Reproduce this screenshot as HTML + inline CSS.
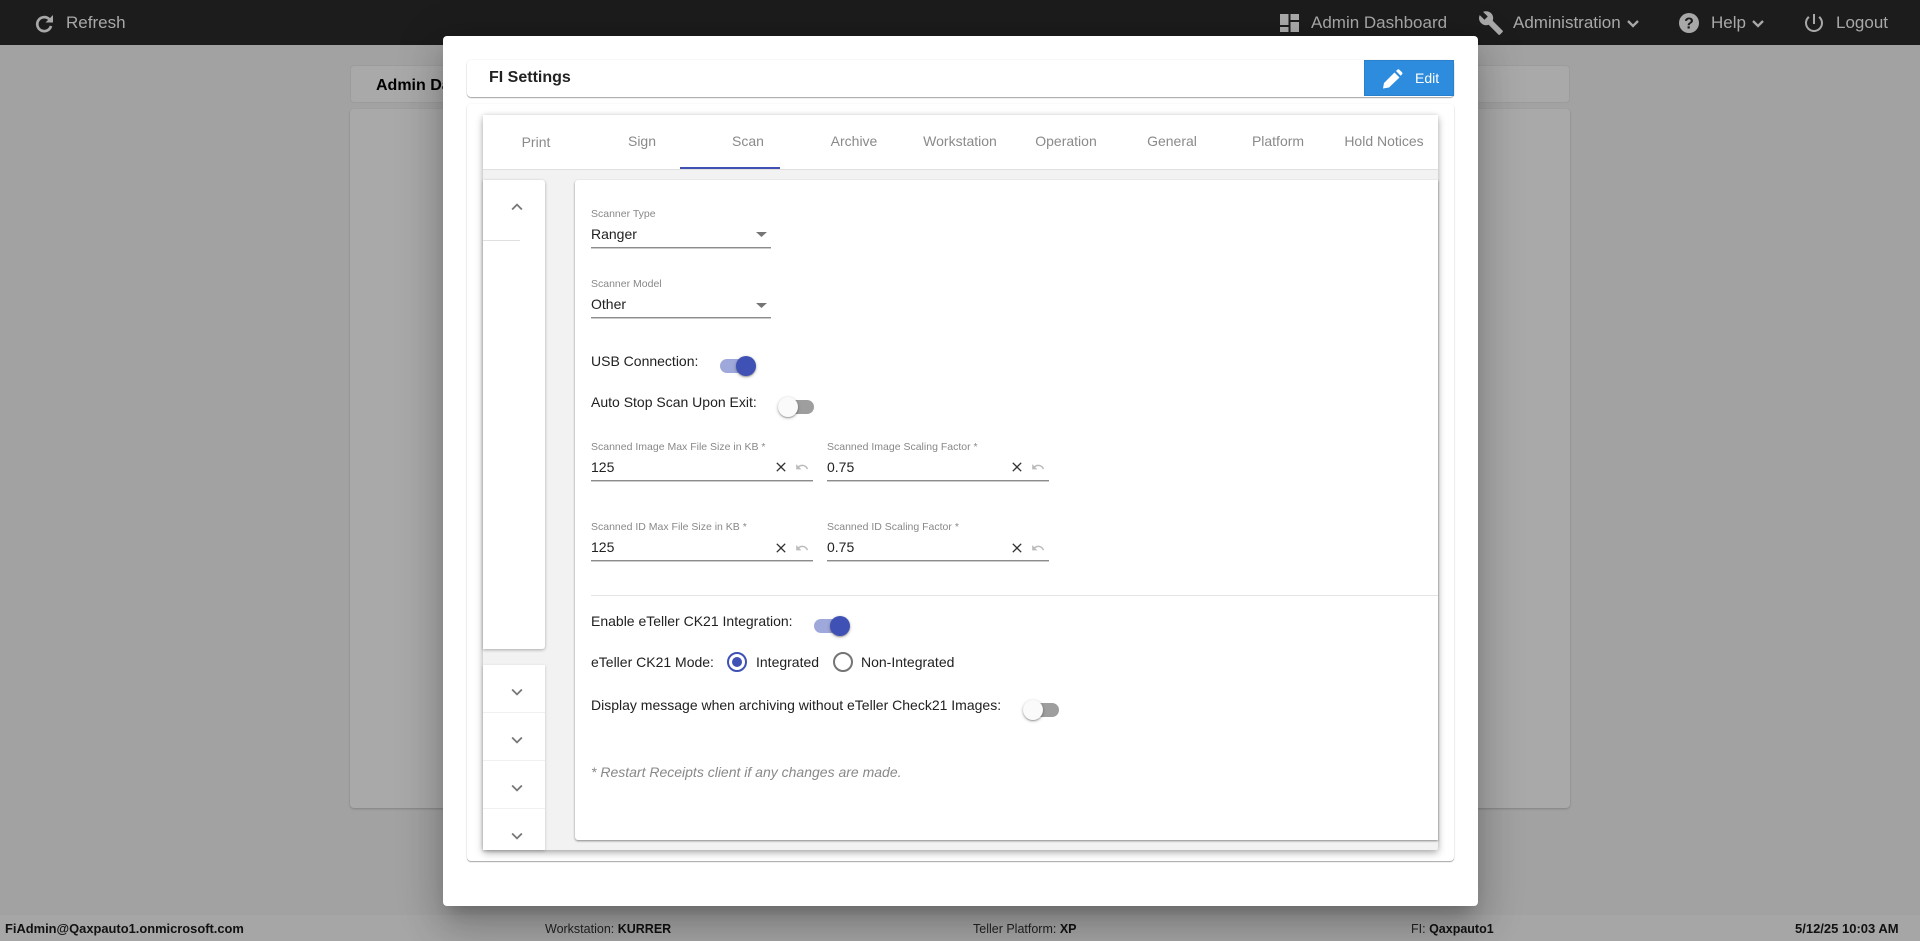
<!DOCTYPE html>
<html><head><meta charset="utf-8"><title>FI Settings</title>
<style>
html,body{margin:0;padding:0;width:1920px;height:941px;overflow:hidden;background:#a2a2a2;font-family:"Liberation Sans",sans-serif}
div,span,svg{position:absolute;box-sizing:border-box}
.t{white-space:nowrap;line-height:20px;height:20px;font-size:14px;color:#212121}
.n{color:#a8a8a8;font-size:17px;top:13px}
.l{font-size:10.5px;color:#888}
.tab{color:#8a8a8a;width:106px;text-align:center;top:131px}
.u{height:1px;background:#8c8c8c;border-bottom:1px solid #ccc;height:2px}
.f{font-size:12.5px;color:#222;top:919px}
.f b{color:#111}
b{position:static}
.tt{height:14px;border-radius:7px}
.th{width:20px;height:20px;border-radius:50%;box-shadow:0 1px 3px rgba(0,0,0,.3),0 1px 1px rgba(0,0,0,.2)}
</style></head><body>
<div style="left:0;top:0;width:1920px;height:45px;background:#1c1c1c"></div>
<svg style="left:34px;top:13px" width="21" height="21" viewBox="0 0 21 21"><path d="M15.200 6.200A7 7 0 1 0 17 13" fill="none" stroke="#a8a8a8" stroke-width="2.700"/><path d="M19 2v7.500h-7.500z" fill="#a8a8a8"/></svg>
<div class="t n" style="left:66px">Refresh</div>
<svg style="left:1280px;top:14px" width="19" height="18" viewBox="0 0 19 18" fill="#aaa"><path d="M0 0h8.500v11H0zM0 13h8.500v5H0zM10.500 0H19v6h-8.500zM10.500 8H19v10h-8.500z"/></svg>
<div class="t n" style="left:1311px">Admin Dashboard</div>
<svg style="left:1478px;top:10px" width="26" height="26" viewBox="0 0 24 24" fill="#a8a8a8"><path d="M22.700 19l-9.100-9.100c.9-2.300.4-5-1.500-6.900-2-2-5-2.400-7.400-1.300L9 6 6 9 1.600 4.700C.4 7.100.9 10.100 2.900 12.100c1.900 1.900 4.600 2.400 6.900 1.500l9.100 9.100c.4.4 1 .4 1.400 0l2.300-2.300c.5-.4.5-1.100.1-1.400z"/></svg>
<div class="t n" style="left:1513px">Administration</div>
<svg style="left:1626px;top:19px" width="14" height="9" viewBox="0 0 14 9"><path d="M2 2l5 5 5-5" fill="none" stroke="#a8a8a8" stroke-width="2.300"/></svg>
<svg style="left:1679px;top:13px" width="20" height="20" viewBox="0 0 20 20"><circle cx="10" cy="10" r="10" fill="#a8a8a8"/><text x="10" y="15.500" text-anchor="middle" font-family="Liberation Sans" font-weight="bold" font-size="16" fill="#1c1c1c">?</text></svg>
<div class="t n" style="left:1711px">Help</div>
<svg style="left:1751px;top:19px" width="14" height="9" viewBox="0 0 14 9"><path d="M2 2l5 5 5-5" fill="none" stroke="#a8a8a8" stroke-width="2.300"/></svg>
<svg style="left:1802px;top:11px" width="24" height="24" viewBox="0 0 24 24" fill="#a8a8a8"><path d="M13 3h-2v10h2V3zm4.830 2.170l-1.420 1.420C17.990 7.860 19 9.810 19 12c0 3.870-3.130 7-7 7s-7-3.130-7-7c0-2.190 1.010-4.140 2.580-5.420L6.170 5.170C4.230 6.820 3 9.260 3 12c0 4.970 4.030 9 9 9s9-4.030 9-9c0-2.740-1.230-5.180-3.170-6.830z"/></svg>
<div class="t n" style="left:1836px">Logout</div>

<div style="left:350px;top:65px;width:1220px;height:38px;background:#a9a9a9;border:1px solid #9c9c9c;border-radius:4px"></div>
<div class="t" style="left:376px;top:76px;font-size:16px;font-weight:bold;color:#000">Admin Dashboard</div>
<div style="left:350px;top:109px;width:1220px;height:699px;background:#a9a9a9;border-radius:4px;box-shadow:0 1px 2px rgba(0,0,0,.2)"></div>

<div style="left:0;top:915px;width:1920px;height:26px;background:#a6a6a6"></div>
<div class="t f" style="left:5px;font-weight:bold;color:#111;font-size:12.900px">FiAdmin@Qaxpauto1.onmicrosoft.com</div>
<div class="t f" style="left:545px">Workstation: <b>KURRER</b></div>
<div class="t f" style="left:973px">Teller Platform: <b>XP</b></div>
<div class="t f" style="left:1411px">FI: <b>Qaxpauto1</b></div>
<div class="t f" style="left:1795px;font-weight:bold;color:#111;font-size:13px">5/12/25 10:03 AM</div>

<div style="left:443px;top:36px;width:1035px;height:870px;background:#fff;border-radius:4px;box-shadow:0 11px 15px -7px rgba(0,0,0,.2),0 24px 38px 3px rgba(0,0,0,.14),0 9px 46px 8px rgba(0,0,0,.12)"></div>

<div style="left:467px;top:60px;width:987px;height:37px;background:#fff;border-radius:4px;box-shadow:0 1px 1px rgba(0,0,0,.35),0 0 2px rgba(0,0,0,.08)"></div>
<div class="t" style="left:489px;top:68px;font-size:16px;font-weight:bold;color:#222">FI Settings</div>
<div style="left:1364px;top:60px;width:90px;height:36px;background:#2d8cdd;border:1px solid #2a80ca"></div>
<svg style="left:1383px;top:69px" width="20" height="20" viewBox="0 0 20 20" fill="#fff"><path d="M0 19.500l1-5.500L11.500 3.500l5 5L6 18.500zM13 2l1.300-1.300c.6-.6 1.500-.6 2.100 0l2.600 2.600c.6.6.6 1.500 0 2.100L17.700 6.700z"/></svg>
<div class="t" style="left:1415px;top:68px;color:#fff">Edit</div>

<div style="left:467px;top:104px;width:987px;height:757px;background:#fff;border-radius:4px;box-shadow:0 1px 1px rgba(0,0,0,.35),0 0 2px rgba(0,0,0,.06)"></div>

<div style="left:483px;top:115px;width:955px;height:735px;background:#f2f2f2;box-shadow:0 3px 8px rgba(0,0,0,.3),0 0 5px rgba(0,0,0,.1);border-radius:2px"></div>
<div style="left:483px;top:115px;width:955px;height:55px;background:#fff;border-bottom:1px solid #e0e0e0"></div>
<div class="t tab" style="left:483px;top:132px">Print</div>
<div class="t tab" style="left:589px">Sign</div>
<div class="t tab" style="left:695px">Scan</div>
<div class="t tab" style="left:801px">Archive</div>
<div class="t tab" style="left:907px">Workstation</div>
<div class="t tab" style="left:1013px">Operation</div>
<div class="t tab" style="left:1119px">General</div>
<div class="t tab" style="left:1225px">Platform</div>
<div class="t tab" style="left:1331px">Hold Notices</div>
<div style="left:680px;top:167px;width:100px;height:2px;background:#3f51b5"></div>

<div style="left:483px;top:180px;width:62px;height:469px;background:#fff;border-radius:0 3px 3px 0;box-shadow:0 1px 3px rgba(0,0,0,.3)"></div>
<svg style="left:506px;top:196px" width="22" height="22" viewBox="0 0 24 24" fill="#777"><path d="M7.410 15.410L12 10.830l4.590 4.580L18 14l-6-6-6 6z"/></svg>
<div style="left:483px;top:240px;width:37px;height:1px;background:#e0e0e0"></div>

<div style="left:483px;top:665px;width:62px;height:185px;background:#fff;box-shadow:0 1px 3px rgba(0,0,0,.2)"></div>
<div style="left:483px;top:712px;width:62px;height:1px;background:#f0f0f0"></div>
<div style="left:483px;top:760px;width:62px;height:1px;background:#f0f0f0"></div>
<div style="left:483px;top:808px;width:62px;height:1px;background:#f0f0f0"></div>
<svg style="left:506px;top:681px" width="22" height="22" viewBox="0 0 24 24" fill="#777"><path d="M7.410 8.590L12 13.170l4.590-4.580L18 10l-6 6-6-6z"/></svg>
<svg style="left:506px;top:729px" width="22" height="22" viewBox="0 0 24 24" fill="#777"><path d="M7.410 8.590L12 13.170l4.590-4.580L18 10l-6 6-6-6z"/></svg>
<svg style="left:506px;top:777px" width="22" height="22" viewBox="0 0 24 24" fill="#777"><path d="M7.410 8.590L12 13.170l4.590-4.580L18 10l-6 6-6-6z"/></svg>
<svg style="left:506px;top:825px" width="22" height="22" viewBox="0 0 24 24" fill="#777"><path d="M7.410 8.590L12 13.170l4.590-4.580L18 10l-6 6-6-6z"/></svg>

<div style="left:575px;top:180px;width:863px;height:660px;background:#fff;border-radius:3px 0 0 3px;box-shadow:0 1px 2px rgba(0,0,0,.45)"></div>

<div class="t l" style="left:591px;top:204px">Scanner Type</div>
<div class="t" style="left:591px;top:224px">Ranger</div>
<svg style="left:756px;top:232px" width="11" height="5" viewBox="0 0 11 5" fill="#757575"><path d="M0 0h11L5.500 5z"/></svg>
<div class="u" style="left:591px;top:247px;width:180px"></div>

<div class="t l" style="left:591px;top:274px">Scanner Model</div>
<div class="t" style="left:591px;top:294px">Other</div>
<svg style="left:756px;top:303px" width="11" height="5" viewBox="0 0 11 5" fill="#757575"><path d="M0 0h11L5.500 5z"/></svg>
<div class="u" style="left:591px;top:317px;width:180px"></div>

<div class="t" style="left:591px;top:351px">USB Connection:</div>
<div class="tt" style="left:720px;top:359px;width:34px;background:#9fa8da"></div>
<div class="th" style="left:736px;top:356px;background:#3f51b5"></div>

<div class="t" style="left:591px;top:392px">Auto Stop Scan Upon Exit:</div>
<div class="tt" style="left:780px;top:400px;width:34px;background:#9e9e9e"></div>
<div class="th" style="left:778px;top:397px;background:#fafafa"></div>

<div class="t l" style="left:591px;top:437px">Scanned Image Max File Size in KB *</div>
<div class="t" style="left:591px;top:457px">125</div>
<svg style="left:773px;top:459px" width="16" height="16" viewBox="0 0 24 24" fill="#333"><path d="M19 6.410L17.590 5 12 10.590 6.410 5 5 6.410 10.590 12 5 17.590 6.410 19 12 13.410 17.590 19 19 17.590 13.410 12z"/></svg>
<svg style="left:795px;top:460px" width="14" height="14" viewBox="0 0 24 24" fill="#bbb"><path d="M12.500 8c-2.650 0-5.050.99-6.900 2.600L2 7v9h9l-3.620-3.620c1.390-1.160 3.160-1.880 5.120-1.880 3.540 0 6.550 2.310 7.600 5.500l2.370-.78C21.080 11.030 17.150 8 12.500 8z"/></svg>
<div class="u" style="left:591px;top:480px;width:222px"></div>

<div class="t l" style="left:827px;top:437px">Scanned Image Scaling Factor *</div>
<div class="t" style="left:827px;top:457px">0.75</div>
<svg style="left:1009px;top:459px" width="16" height="16" viewBox="0 0 24 24" fill="#333"><path d="M19 6.410L17.590 5 12 10.590 6.410 5 5 6.410 10.590 12 5 17.590 6.410 19 12 13.410 17.590 19 19 17.590 13.410 12z"/></svg>
<svg style="left:1031px;top:460px" width="14" height="14" viewBox="0 0 24 24" fill="#bbb"><path d="M12.500 8c-2.650 0-5.050.99-6.900 2.600L2 7v9h9l-3.620-3.620c1.390-1.160 3.160-1.880 5.120-1.880 3.540 0 6.550 2.310 7.600 5.500l2.370-.78C21.080 11.030 17.150 8 12.500 8z"/></svg>
<div class="u" style="left:827px;top:480px;width:222px"></div>

<div class="t l" style="left:591px;top:517px">Scanned ID Max File Size in KB *</div>
<div class="t" style="left:591px;top:537px">125</div>
<svg style="left:773px;top:540px" width="16" height="16" viewBox="0 0 24 24" fill="#333"><path d="M19 6.410L17.590 5 12 10.590 6.410 5 5 6.410 10.590 12 5 17.590 6.410 19 12 13.410 17.590 19 19 17.590 13.410 12z"/></svg>
<svg style="left:795px;top:541px" width="14" height="14" viewBox="0 0 24 24" fill="#bbb"><path d="M12.500 8c-2.650 0-5.050.99-6.900 2.600L2 7v9h9l-3.620-3.620c1.390-1.160 3.160-1.880 5.120-1.880 3.540 0 6.550 2.310 7.600 5.500l2.370-.78C21.080 11.030 17.150 8 12.500 8z"/></svg>
<div class="u" style="left:591px;top:560px;width:222px"></div>

<div class="t l" style="left:827px;top:517px">Scanned ID Scaling Factor *</div>
<div class="t" style="left:827px;top:537px">0.75</div>
<svg style="left:1009px;top:540px" width="16" height="16" viewBox="0 0 24 24" fill="#333"><path d="M19 6.410L17.590 5 12 10.590 6.410 5 5 6.410 10.590 12 5 17.590 6.410 19 12 13.410 17.590 19 19 17.590 13.410 12z"/></svg>
<svg style="left:1031px;top:541px" width="14" height="14" viewBox="0 0 24 24" fill="#bbb"><path d="M12.500 8c-2.650 0-5.050.99-6.900 2.600L2 7v9h9l-3.620-3.620c1.390-1.160 3.160-1.880 5.120-1.880 3.540 0 6.550 2.310 7.600 5.500l2.370-.78C21.080 11.030 17.150 8 12.500 8z"/></svg>
<div class="u" style="left:827px;top:560px;width:222px"></div>

<div style="left:591px;top:595px;width:847px;height:1px;background:#e4e4e4"></div>

<div class="t" style="left:591px;top:611px">Enable eTeller CK21 Integration:</div>
<div class="tt" style="left:814px;top:619px;width:34px;background:#9fa8da"></div>
<div class="th" style="left:830px;top:616px;background:#3f51b5"></div>

<div class="t" style="left:591px;top:652px">eTeller CK21 Mode:</div>
<div style="left:727px;top:652px;width:20px;height:20px;border:2px solid #3f51b5;border-radius:50%"></div>
<div style="left:732px;top:657px;width:10px;height:10px;background:#3f51b5;border-radius:50%"></div>
<div class="t" style="left:756px;top:652px">Integrated</div>
<div style="left:833px;top:652px;width:20px;height:20px;border:2px solid #757575;border-radius:50%"></div>
<div class="t" style="left:861px;top:652px">Non-Integrated</div>

<div class="t" style="left:591px;top:695px">Display message when archiving without eTeller Check21 Images:</div>
<div class="tt" style="left:1025px;top:703px;width:34px;background:#9e9e9e"></div>
<div class="th" style="left:1023px;top:700px;background:#fafafa"></div>

<div class="t" style="left:591px;top:762px;font-style:italic;color:#888">* Restart Receipts client if any changes are made.</div>
</body></html>
